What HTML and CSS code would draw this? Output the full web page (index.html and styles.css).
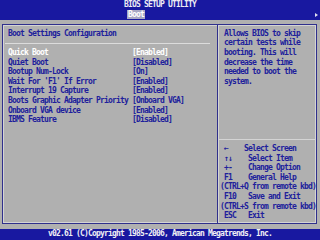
FILE: index.html
```html
<!DOCTYPE html>
<html lang="en">
<head>
  <meta charset="UTF-8">
  <title>BIOS Setup Utility</title>
  <link rel="stylesheet" href="styles.css">
</head>
<body>
  <div class="screen">
    <header class="topbar">
      <div class="title">BIOS SETUP UTILITY</div>
      <div class="tabs">
        <span class="tab">Boot</span>
        <span class="more"></span>
      </div>
    </header>

    <main class="frame">
      <div class="box">
        <section class="settings">
          <div class="heading">Boot Settings Configuration</div>
          <div class="rule"></div>
          <div class="opt selected"><span>Quick Boot</span><span>[Enabled]</span></div>
          <div class="opt"><span>Quiet Boot</span><span>[Disabled]</span></div>
          <div class="opt"><span>Bootup Num-Lock</span><span>[On]</span></div>
          <div class="opt"><span>Wait For 'F1' If Error</span><span>[Enabled]</span></div>
          <div class="opt"><span>Interrupt 19 Capture</span><span>[Enabled]</span></div>
          <div class="opt"><span>Boots Graphic Adapter Priority</span><span>[Onboard VGA]</span></div>
          <div class="opt"><span>Onboard VGA device</span><span>[Enabled]</span></div>
          <div class="opt"><span>IBMS Feature</span><span>[Disabled]</span></div>
        </section>

        <aside class="side">
          <div class="help">
            <div>Allows BIOS to skip</div>
            <div>certain tests while</div>
            <div>booting. This will</div>
            <div>decrease the time</div>
            <div>needed to boot the</div>
            <div>system.</div>
          </div>
          <div class="keys">
            <div> &larr;    Select Screen</div>
            <div> &uarr;&darr;    Select Item</div>
            <div> +-    Change Option</div>
            <div> F1    General Help</div>
            <div>(CTRL+Q from remote kbd)</div>
            <div> F10   Save and Exit</div>
            <div>(CTRL+S from remote kbd)</div>
            <div> ESC   Exit</div>
          </div>
        </aside>
      </div>
    </main>

    <footer class="status">v02.61 (C)Copyright 1985-2006, American Megatrends, Inc.</footer>
  </div>
</body>
</html>
```

FILE: styles.css
```css
* {
  box-sizing: border-box;
  margin: 0;
  padding: 0;
}
body {
  width: 320px;
  height: 240px;
  overflow: hidden;
  background: #b0b0b0;
  color: #20209c;
  font-family: "DejaVu Sans Mono", "Liberation Mono", monospace;
  font-weight: bold;
  font-size: 8px;
  letter-spacing: -0.816px;
  line-height: 9.6px;
}
.screen {
  display: flex;
  flex-direction: column;
  height: 240px;
}
.topbar {
  background: #1818a0;
  color: #ececf4;
  height: 20px;
}
.title {
  height: 9.6px;
  padding-left: 124px;
}
.tabs {
  display: flex;
  align-items: center;
  height: 10.4px;
  padding-left: 127px;
}
.tab {
  background: #a8a8c4;
  color: #ffffff;
  padding: 0 1px;
  line-height: 9.4px;
}
.more {
  margin-left: auto;
  margin-right: 2px;
  border-left: 3px solid #e0e0f0;
  border-top: 2.5px solid transparent;
  border-bottom: 2.5px solid transparent;
}
.frame {
  flex: 1;
  display: flex;
  padding: 3.5px 4px 5px 2px;
}
.box {
  flex: 1;
  display: flex;
  border: 1px solid #30308c;
  box-shadow: inset 1px 1px 0 #d4d4d4, inset -1px -1px 0 #d4d4d4;
}
.settings {
  width: 214px;
  padding: 4.3px 0 0 5px;
}
.rule {
  height: 1px;
  margin: 4.3px 7px 4.3px -3px;
  background: #dcdcdc;
}
.opt {
  display: grid;
  grid-template-columns: 124px auto;
  white-space: pre;
}
.opt.selected {
  color: #ffffff;
}
.side {
  flex: 1;
  display: flex;
  flex-direction: column;
  border-left: 1px solid #30308c;
  box-shadow: inset 1px 0 0 #d4d4d4;
  padding: 4.3px 0 2.6px 0;
}
.help {
  padding-left: 6px;
}
.keys {
  margin-top: auto;
  border-top: 1px solid #d4d4d4;
  padding: 4px 0 0 2px;
}
.keys div {
  white-space: pre;
}
.status {
  height: 10.6px;
  line-height: 10.6px;
  background: #1818a0;
  color: #f0f0f4;
  padding-left: 48px;
}
```
